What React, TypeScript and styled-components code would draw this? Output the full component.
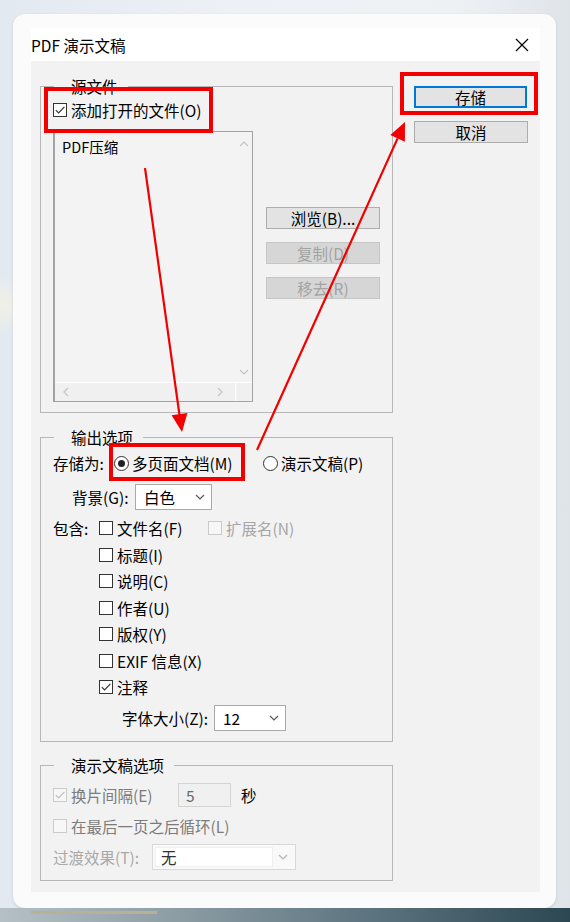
import styled, { createGlobalStyle, css } from 'styled-components';

const GlobalStyle = createGlobalStyle`
  html, body {
    margin: 0;
    padding: 0;
  }
  body {
    font-family: "Noto Sans CJK SC", "Noto Sans", sans-serif;
    font-size: 15.5px;
    color: #000;
  }
  * {
    box-sizing: border-box;
  }
`;

type Dir = 'up' | 'down' | 'left' | 'right';

const chevronPoints: Record<Dir, string> = {
  up: '1,6 5,2 9,6',
  down: '1,2 5,6 9,2',
  left: '6,1 2,5 6,9',
  right: '2,1 6,5 2,9',
};

function Chevron({ dir, color = '#c4c4c4' }: { dir: Dir; color?: string }) {
  const wide = dir === 'up' || dir === 'down';
  return (
    <svg width={wide ? 10 : 8} height={wide ? 8 : 10} viewBox={wide ? '0 0 10 8' : '0 0 8 10'}>
      <polyline points={chevronPoints[dir]} fill="none" stroke={color} strokeWidth="1.2" />
    </svg>
  );
}

function CheckBox({ checked, disabled }: { checked?: boolean; disabled?: boolean }) {
  return (
    <Box $disabled={disabled}>
      {checked && (
        <svg width="12" height="12" viewBox="0 0 12 12">
          <polyline points="1.8,6.2 4.6,9 10.4,2.8" fill="none" stroke="currentColor" strokeWidth="1.2" />
        </svg>
      )}
    </Box>
  );
}

function Check({
  label,
  checked,
  disabled,
  tone,
}: {
  label: string;
  checked?: boolean;
  disabled?: boolean;
  tone?: string;
}) {
  return (
    <CheckItem style={tone ? { color: tone } : undefined}>
      <CheckBox checked={checked} disabled={disabled} />
      <span>{label}</span>
    </CheckItem>
  );
}

function Radio({ label, checked }: { label: string; checked?: boolean }) {
  return (
    <RadioItem>
      <RadioDot $checked={checked} />
      <span>{label}</span>
    </RadioItem>
  );
}

function App() {
  return (
    <>
      <GlobalStyle />
      <Page>
        <Card>
          <Dialog>
            <TitleBar>
              <span>PDF 演示文稿</span>
              <svg width="14" height="14" viewBox="0 0 14 14">
                <path d="M1 1 L13 13 M13 1 L1 13" stroke="#000" strokeWidth="1.2" />
              </svg>
            </TitleBar>
            <Body>
              <LeftCol>
                <Group>
                  <Legend>源文件</Legend>
                  <SourceBody>
                    <Check label="添加打开的文件(O)" checked />
                    <SourceRow>
                      <ListBox>
                        <ListMain>
                          <ListContent>PDF压缩</ListContent>
                          <VScroll>
                            <Chevron dir="up" />
                            <Chevron dir="down" />
                          </VScroll>
                        </ListMain>
                        <HScrollRow>
                          <HScroll>
                            <Chevron dir="left" />
                            <Chevron dir="right" />
                          </HScroll>
                          <Corner />
                        </HScrollRow>
                      </ListBox>
                      <SideButtons>
                        <Button>浏览(B)...</Button>
                        <Button $disabled>复制(D)</Button>
                        <Button $disabled>移去(R)</Button>
                      </SideButtons>
                    </SourceRow>
                  </SourceBody>
                </Group>

                <Group $top={14}>
                  <Legend>输出选项</Legend>
                  <OutputBody>
                    <Row $h={22}>
                      <FieldLabel $w={61}>存储为:</FieldLabel>
                      <RadioSlot>
                        <Radio label="多页面文档(M)" checked />
                      </RadioSlot>
                      <Radio label="演示文稿(P)" />
                    </Row>
                    <Row $h={26} $indent={19}>
                      <FieldLabel $w={63}>背景(G):</FieldLabel>
                      <Select $w={77}>
                        <span>白色</span>
                        <Chevron dir="down" color="#5a5a5a" />
                      </Select>
                    </Row>
                    <IncludeGrid>
                      <FieldLabel>包含:</FieldLabel>
                      <Check label="文件名(F)" />
                      <Check label="扩展名(N)" disabled tone="#a6a6a6" />
                      <Check label="标题(I)" />
                      <Check label="说明(C)" />
                      <Check label="作者(U)" />
                      <Check label="版权(Y)" />
                      <Check label="EXIF 信息(X)" />
                      <Check label="注释" checked />
                    </IncludeGrid>
                    <Row $h={26} $indent={69}>
                      <FieldLabel $w={92}>字体大小(Z):</FieldLabel>
                      <Select $w={72}>
                        <span>12</span>
                        <Chevron dir="down" color="#5a5a5a" />
                      </Select>
                    </Row>
                  </OutputBody>
                </Group>

                <Group $top={13}>
                  <Legend>演示文稿选项</Legend>
                  <SlideBody>
                    <Row $h={24}>
                      <CheckSlot>
                        <Check label="换片间隔(E)" checked disabled tone="#7c7c7c" />
                      </CheckSlot>
                      <NumberInput>5</NumberInput>
                      <Unit>秒</Unit>
                    </Row>
                    <Row $h={20}>
                      <Check label="在最后一页之后循环(L)" disabled tone="#7c7c7c" />
                    </Row>
                    <Row $h={26}>
                      <FieldLabel $w={99} $muted>
                        过渡效果(T):
                      </FieldLabel>
                      <Select $w={144} $disabled>
                        <SelectField>无</SelectField>
                        <Chevron dir="down" color="#b4b4b4" />
                      </Select>
                    </Row>
                  </SlideBody>
                </Group>
              </LeftCol>

              <RightCol>
                <Button $focused>存储</Button>
                <Button>取消</Button>
              </RightCol>
            </Body>
          </Dialog>
        </Card>
        <Taskbar>
          <TaskStripe />
        </Taskbar>

        <Overlay width="570" height="922" viewBox="0 0 570 922">
          <g fill="none" stroke="#f20000" strokeWidth="4">
            <rect x="46" y="89" width="165" height="42" />
            <rect x="111" y="445" width="132" height="34" />
            <rect x="402" y="74" width="134" height="39" />
          </g>
          <g stroke="#f20000" strokeWidth="2.2" fill="#f20000">
            <line x1="145" y1="168" x2="179.5" y2="415" />
            <polygon points="182,432 171.6,415.3 187.4,413.1" stroke="none" />
            <line x1="257" y1="450" x2="397.6" y2="138.4" />
            <polygon points="405,122 404.9,141.7 390.3,135.1" stroke="none" />
          </g>
        </Overlay>
      </Page>
    </>
  );
}

export default App;

const Page = styled.div`
  position: relative;
  width: 570px;
  height: 922px;
  overflow: hidden;
  display: flex;
  flex-direction: column;
  background:
    radial-gradient(ellipse 40px 30px at 0 305px, #f0f0e6 0%, rgba(240, 240, 230, 0) 100%),
    linear-gradient(90deg, #e3e9f1 0%, #edf1f6 40%, #eef1f4 80%, #dfe4e9 100%);
`;

const Card = styled.div`
  flex: none;
  height: 894px;
  margin: 14px 14px 0 13px;
  padding: 14px 16px 16px 18px;
  display: flex;
  border-radius: 12px;
  background: #fbfbfb;
  box-shadow: 0 1px 3px rgba(0, 0, 0, 0.12);
`;

const Dialog = styled.div`
  flex: 1;
  display: flex;
  flex-direction: column;
`;

const TitleBar = styled.div`
  height: 33px;
  display: flex;
  align-items: center;
  justify-content: space-between;
  padding-right: 11px;
  background: #fff;
  line-height: 20px;
`;

const Body = styled.div`
  flex: 1;
  display: flex;
  align-items: flex-start;
  padding: 15px 0 0 9px;
  background: #f2f2f2;
`;

const LeftCol = styled.div`
  width: 353px;
  display: flex;
  flex-direction: column;
`;

const RightCol = styled.div`
  width: 113px;
  margin-left: 21px;
  padding-top: 10px;
  display: flex;
  flex-direction: column;
  gap: 13px;
`;

const Group = styled.fieldset<{ $top?: number }>`
  margin: ${({ $top }) => $top ?? 0}px 0 0;
  padding: 0;
  min-width: 0;
  border: 1px solid #b7b7b7;
`;

const Legend = styled.legend`
  margin-left: 13px;
  padding: 0 10px 0 17px;
  line-height: 20px;
`;

const SourceBody = styled.div`
  display: flex;
  flex-direction: column;
  gap: 11px;
  padding: 4px 0 10px 12px;
  > label {
    height: 20px;
  }
`;

const SourceRow = styled.div`
  display: flex;
  gap: 13px;
`;

const ListBox = styled.div`
  width: 200px;
  height: 271px;
  display: flex;
  flex-direction: column;
  border: 1px solid #a3a3a3;
  border-left-width: 2px;
  background: #f3f3f3;
`;

const ListMain = styled.div`
  flex: 1;
  display: flex;
`;

const ListContent = styled.div`
  flex: 1;
  padding: 5px 0 0 7px;
  line-height: 20px;
  font-size: 14.5px;
`;

const VScroll = styled.div`
  width: 17px;
  display: flex;
  flex-direction: column;
  align-items: center;
  justify-content: space-between;
  padding: 8px 0 6px;
`;

const HScrollRow = styled.div`
  height: 19px;
  display: flex;
`;

const HScroll = styled.div`
  flex: 1;
  display: flex;
  align-items: center;
  justify-content: space-between;
  padding: 0 11px 0 7px;
  border-top: 1px solid #fff;
  background: #f0f0f0;
`;

const Corner = styled.div`
  width: 17px;
  border-top: 1px solid #fff;
  border-left: 1px solid #fff;
  background: #f0f0f0;
`;

const SideButtons = styled.div`
  display: flex;
  flex-direction: column;
  gap: 13px;
  padding-top: 76px;
`;

const Button = styled.div<{ $disabled?: boolean; $focused?: boolean }>`
  width: 114px;
  height: 22px;
  display: flex;
  align-items: center;
  justify-content: center;
  line-height: 20px;
  border: 1px solid #adadad;
  background: #e3e3e3;
  ${({ $disabled }) =>
    $disabled &&
    css`
      border-color: #c6c6c6;
      background: #d6d6d6;
      color: #a3a3a3;
    `}
  ${({ $focused }) =>
    $focused &&
    css`
      width: 113px;
      border: 2px solid #0078d7;
    `}
`;

const OutputBody = styled.div`
  display: flex;
  flex-direction: column;
  padding: 5px 0 10px 12px;
  > :nth-child(2) {
    margin-top: 10px;
  }
  > :nth-child(3) {
    margin-top: 5px;
  }
  > :nth-child(4) {
    margin-top: 4.5px;
  }
`;

const SlideBody = styled.div`
  display: flex;
  flex-direction: column;
  padding: 8px 0 10px 12px;
  > :nth-child(2) {
    margin-top: 9px;
  }
  > :nth-child(3) {
    margin-top: 8px;
  }
`;

const Row = styled.div<{ $h: number; $indent?: number }>`
  height: ${({ $h }) => $h}px;
  display: flex;
  align-items: center;
  padding-left: ${({ $indent }) => $indent ?? 0}px;
  line-height: 20px;
`;

const FieldLabel = styled.span<{ $w?: number; $muted?: boolean }>`
  flex: none;
  width: ${({ $w }) => ($w ? `${$w}px` : 'auto')};
  white-space: nowrap;
  color: ${({ $muted }) => ($muted ? '#a8a8a8' : '#000')};
`;

const RadioSlot = styled.div`
  width: 149px;
`;

const CheckSlot = styled.div`
  width: 125px;
`;

const IncludeGrid = styled.div`
  display: grid;
  grid-template-columns: 46px 109px auto;
  grid-auto-rows: 26.5px;
  align-items: center;
  line-height: 20px;
  > :nth-child(n + 4) {
    grid-column: 2;
  }
`;

const CheckItem = styled.label`
  display: flex;
  align-items: center;
  gap: 4px;
  white-space: nowrap;
  line-height: 20px;
`;

const Box = styled.span<{ $disabled?: boolean }>`
  flex: none;
  width: 14px;
  height: 14px;
  display: flex;
  align-items: center;
  justify-content: center;
  border: 1px solid ${({ $disabled }) => ($disabled ? '#cbcbcb' : '#333')};
  background: ${({ $disabled }) => ($disabled ? '#f7f7f7' : '#fff')};
  color: ${({ $disabled }) => ($disabled ? '#bdbdbd' : '#333')};
`;

const RadioItem = styled.label`
  display: flex;
  align-items: center;
  gap: 3px;
  white-space: nowrap;
`;

const RadioDot = styled.span<{ $checked?: boolean }>`
  flex: none;
  width: 15px;
  height: 15px;
  border-radius: 50%;
  border: 1px solid #333;
  background: #fff;
  display: flex;
  align-items: center;
  justify-content: center;
  &::after {
    content: '';
    width: 7px;
    height: 7px;
    border-radius: 50%;
    background: #222;
    display: ${({ $checked }) => ($checked ? 'block' : 'none')};
  }
`;

const Select = styled.div<{ $w: number; $disabled?: boolean }>`
  width: ${({ $w }) => $w}px;
  height: 26px;
  display: flex;
  align-items: center;
  justify-content: space-between;
  padding: 0 6px 0 8px;
  border: 1px solid #a9a9a9;
  background: #fff;
  ${({ $disabled }) =>
    $disabled &&
    css`
      padding: 2px 7px 2px 2px;
      border-color: #d9d9d9;
      background: #f9f9f9;
    `}
`;

const SelectField = styled.span`
  width: 118px;
  height: 100%;
  display: flex;
  align-items: center;
  padding-left: 5px;
  background: #fff;
  border: 1px solid #efefef;
  color: #333;
`;

const NumberInput = styled.div`
  width: 53px;
  height: 24px;
  display: flex;
  align-items: center;
  padding-left: 7px;
  border: 1px solid #d4d4d4;
  background: #f0f0f0;
  color: #6a6a6a;
`;

const Unit = styled.span`
  margin-left: 10px;
`;

const Taskbar = styled.div`
  flex: 1;
  padding: 3px 0 0 31px;
  background: linear-gradient(90deg, #b5c0c6 0%, #8e9ea5 30%, #5c7480 65%, #2c4652 100%);
`;

const TaskStripe = styled.div`
  width: 126px;
  height: 3px;
  background: #b7b296;
`;

const Overlay = styled.svg`
  position: absolute;
  top: 0;
  left: 0;
  pointer-events: none;
`;
